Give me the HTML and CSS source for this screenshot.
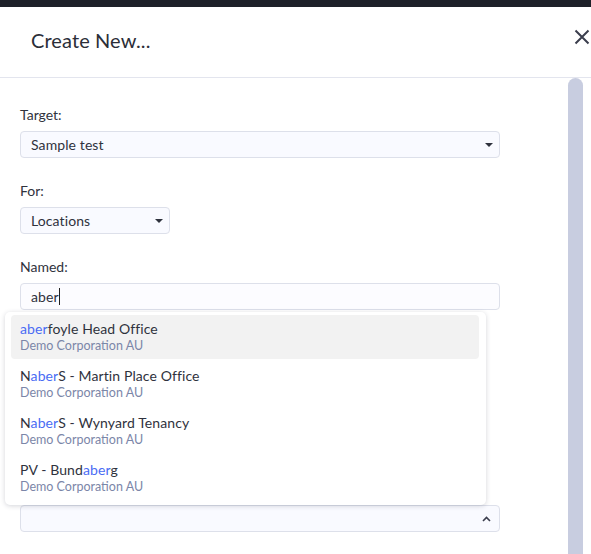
FILE: index.html
```html
<!DOCTYPE html>
<html>
<head>
<meta charset="utf-8">
<link rel="stylesheet" href="styles.css">
</head>
<body>
<div class="topbar"></div>
<div class="modal">
  <div class="modal-header">
    <h1 class="title">Create New...</h1>
    <button class="close" aria-label="Close">
      <svg width="16" height="16" viewBox="0 0 16 16"><path d="M1.5 1.5L14.5 14.5M14.5 1.5L1.5 14.5" stroke="#3b3e4d" stroke-width="2" fill="none"/></svg>
    </button>
  </div>
  <div class="modal-body">
    <div class="content">
      <div class="field">
        <div class="label">Target:</div>
        <div class="select wide"><span>Sample test</span><span class="caret"></span></div>
      </div>
      <div class="field">
        <div class="label">For:</div>
        <div class="select narrow"><span>Locations</span><span class="caret"></span></div>
      </div>
      <div class="field named">
        <div class="label">Named:</div>
        <div class="input wide"><span>aber</span><span class="cursor"></span></div>
        <ul class="menu">
          <li class="item active"><div class="name"><b>aber</b>foyle Head Office</div><div class="org">Demo Corporation AU</div></li>
          <li class="item"><div class="name">N<b>aber</b>S - Martin Place Office</div><div class="org">Demo Corporation AU</div></li>
          <li class="item"><div class="name">N<b>aber</b>S - Wynyard Tenancy</div><div class="org">Demo Corporation AU</div></li>
          <li class="item"><div class="name">PV - Bund<b>aber</b>g</div><div class="org">Demo Corporation AU</div></li>
        </ul>
      </div>
      <div class="select wide last">
        <span></span>
        <svg class="chev" width="9" height="6" viewBox="0 0 9 6"><path d="M1 5L4.5 1.5L8 5" stroke="#3b3e4d" stroke-width="1.6" fill="none"/></svg>
      </div>
    </div>
    <div class="scrolltrack"><div class="thumb"></div></div>
  </div>
</div>
</body>
</html>
```
FILE: styles.css
```css
* { box-sizing: border-box; }
html, body { margin: 0; padding: 0; height: 100%; overflow: hidden; }
body {
  font-family: Lato, "Open Sans", Arial, sans-serif;
  color: #2f323d;
  background: #fff;
}
.topbar { height: 7px; background: #1e2129; }
.modal { background: #fff; }
.modal-header {
  height: 71px;
  display: flex;
  align-items: center;
  justify-content: space-between;
  border-bottom: 1px solid #e3e5ee;
  padding: 0 1px 0 31px;
}
.title {
  margin: 0;
  font-size: 20px;
  font-weight: 400;
  color: #2b2e38;
  letter-spacing: 0.1px;
  margin-top: -4px;
}
.close {
  border: 0;
  background: none;
  padding: 0;
  width: 17px;
  height: 17px;
  margin-top: -10px;
  display: flex;
  align-items: center;
  justify-content: center;
}
.modal-body {
  display: flex;
  height: 480px;
}
.content {
  flex: 1;
  padding: 27px 0 0 20px;
}
.field { margin-bottom: 23px; }
.field.named { position: relative; }
.label {
  font-size: 14px;
  line-height: 20px;
  height: 20px;
  margin-bottom: 6px;
  color: #30333d;
}
.select, .input {
  height: 27px;
  background: #f9faff;
  border: 1px solid #dde0ea;
  border-radius: 4px;
  display: flex;
  align-items: center;
  justify-content: space-between;
  padding: 0 5px 0 10px;
  font-size: 14px;
  letter-spacing: 0.1px;
  color: #2f323d;
}
.wide { width: 480px; }
.narrow { width: 150px; }
.caret {
  width: 0; height: 0;
  border-left: 4px solid transparent;
  border-right: 4px solid transparent;
  border-top: 4px solid #2f323d;
  margin-right: 1px;
}
.input { justify-content: flex-start; background: #fcfcff; padding-left: 10px; }
.cursor {
  display: inline-block;
  width: 1px;
  height: 17px;
  background: #222;
  margin-left: 0;
}
.menu {
  position: absolute;
  left: -15px;
  top: 55px;
  width: 481px;
  margin: 0;
  padding: 3px 7px 5px 6px;
  list-style: none;
  background: #fff;
  border-radius: 5px;
  box-shadow: 0 1px 5px rgba(40, 45, 70, 0.2);
  z-index: 5;
}
.item {
  height: 44px;
  padding: 5px 9px;
  border-radius: 4px;
  margin-bottom: 3px;
}
.item:last-child { margin-bottom: 0; }
.item.active { background: #f2f2f2; }
.name {
  font-size: 14px;
  line-height: 18px;
  letter-spacing: 0.1px;
  color: #2f323d;
}
.name b { font-weight: 400; color: #4a6cf4; }
.org {
  font-size: 12.5px;
  line-height: 16px;
  color: #7b86a8;
}
.last { margin-top: 195px; }
.chev { margin-right: 3px; }
.scrolltrack {
  width: 15px;
  margin-right: 8px;
}
.thumb {
  height: 100%;
  background: #c8cde0;
  border-radius: 8px 8px 0 0;
}
```
